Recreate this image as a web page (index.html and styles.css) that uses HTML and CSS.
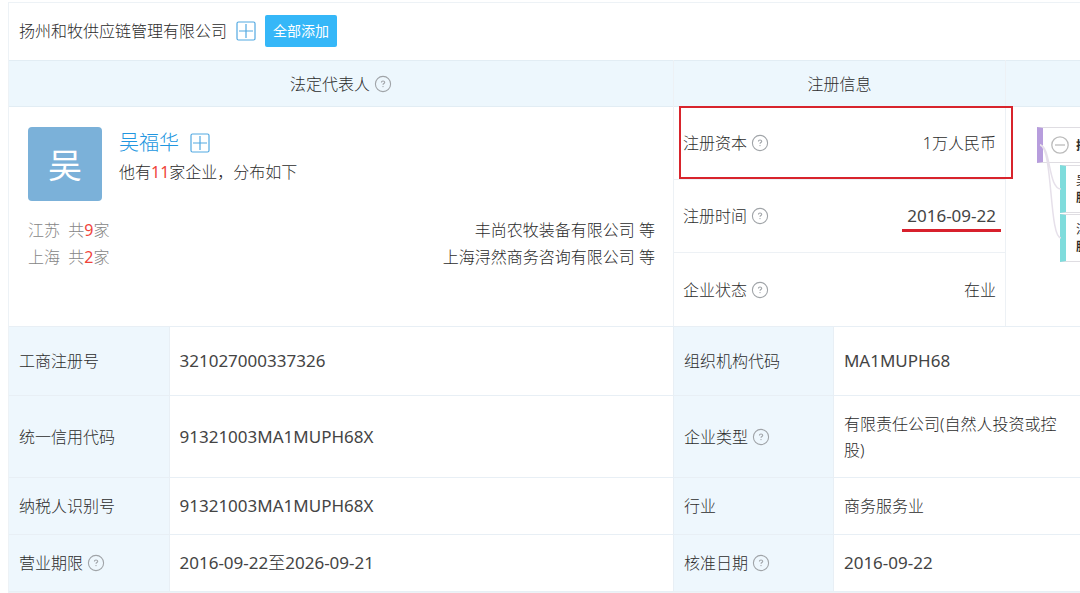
FILE: index.html
```html
<!DOCTYPE html>
<html lang="zh-CN">
<head>
<meta charset="utf-8">
<meta name="viewport" content="width=device-width, initial-scale=1">
<title>扬州和牧供应链管理有限公司</title>
<link rel="stylesheet" href="styles.css">
</head>
<body>
<svg class="defs" aria-hidden="true">
  <symbol id="help" viewBox="0 0 18 18"><circle cx="9" cy="9" r="7.6" fill="none" stroke="currentColor" stroke-width="1.1"/><path d="M7.4 7.5c0-2 3.3-2 3.3-.1 0 1.2-1.7 1.1-1.7 2.4" fill="none" stroke="currentColor" stroke-width="1.1"/><circle cx="9" cy="11.6" r=".7" fill="currentColor"/></symbol>
  <symbol id="plus" viewBox="0 0 20 20"><rect x="1" y="1" width="18" height="18" rx="1.5" fill="none" stroke="currentColor" stroke-width="1.2"/><path d="M10 3v14M3 10h14" fill="none" stroke="currentColor" stroke-width="1.2"/></symbol>
</svg>
<main class="company">
  <header class="company-head">
    <h1 class="company-name">扬州和牧供应链管理有限公司</h1>
    <button class="icon-button" aria-label="添加"><svg><use href="#plus"/></svg></button>
    <button class="add-all">全部添加</button>
  </header>

  <div class="overview">
    <section class="column">
      <h2 class="column-title">法定代表人<svg class="help"><use href="#help"/></svg></h2>
      <div class="person">
        <div class="person-head">
          <div class="avatar">吴</div>
          <div class="person-text">
            <div class="person-name"><a href="#person">吴福华</a><button class="icon-button" aria-label="添加吴福华"><svg><use href="#plus"/></svg></button></div>
            <p>他有<em>11</em>家企业，分布如下</p>
          </div>
        </div>
        <ul class="regions">
          <li><span class="region">江苏&nbsp; 共<em>9</em>家</span><span>丰尚农牧装备有限公司 等</span></li>
          <li><span class="region">上海&nbsp; 共<em>2</em>家</span><span>上海浔然商务咨询有限公司 等</span></li>
        </ul>
      </div>
    </section>

    <section class="column">
      <h2 class="column-title">注册信息</h2>
      <dl class="facts">
        <div class="fact marked"><dt>注册资本<svg class="help"><use href="#help"/></svg></dt><dd>1万人民币</dd></div>
        <div class="fact"><dt>注册时间<svg class="help"><use href="#help"/></svg></dt><dd class="latin underlined">2016-09-22</dd></div>
        <div class="fact"><dt>企业状态<svg class="help"><use href="#help"/></svg></dt><dd>在业</dd></div>
      </dl>
    </section>

    <section class="column tree-column">
      <h2 class="column-title"></h2>
      <div class="tree">
        <svg class="links"><path d="M3 38C14 39 11 82 24 82M3 38C16 40 12 131 24 131" fill="none" stroke="#e6e0ea" stroke-width="1.5"/></svg>
        <div class="node root"><svg class="collapse" viewBox="0 0 18 18"><circle cx="9" cy="9" r="8.2" fill="none" stroke="#bbb" stroke-width="1.3"/><path d="M4 9h10" stroke="#bbb" stroke-width="1.3"/></svg>扬州和牧</div>
        <div class="node child first">吴福华<br>股东</div>
        <div class="node child second">江苏<br>股东</div>
      </div>
    </section>
  </div>

  <table class="details">
    <colgroup><col class="label-col"><col class="wide-col"><col class="label-col"><col></colgroup>
    <tr class="row-medium"><th scope="row">工商注册号</th><td class="latin">321027000337326</td><th scope="row">组织机构代码</th><td class="latin">MA1MUPH68</td></tr>
    <tr class="row-tall"><th scope="row">统一信用代码</th><td class="latin">91321003MA1MUPH68X</td><th scope="row">企业类型<svg class="help"><use href="#help"/></svg></th><td>有限责任公司(自然人投资或控股)</td></tr>
    <tr><th scope="row">纳税人识别号</th><td class="latin">91321003MA1MUPH68X</td><th scope="row">行业</th><td>商务服务业</td></tr>
    <tr><th scope="row">营业期限<svg class="help"><use href="#help"/></svg></th><td class="latin">2016-09-22<span class="light">至</span>2026-09-21</td><th scope="row">核准日期<svg class="help"><use href="#help"/></svg></th><td class="latin">2016-09-22</td></tr>
  </table>
</main>
</body>
</html>
```
FILE: styles.css
```css
* { box-sizing: border-box; }
body {
  margin: 0;
  background: #fff;
  color: #2c2c2c;
  font: 300 16px/26px "Noto Sans", "Noto Sans CJK SC", sans-serif;
  overflow-x: hidden;
}
h1, h2, p, ul, dl, dd { margin: 0; padding: 0; font-weight: inherit; font-size: inherit; }
ul { list-style: none; }
em { font-style: normal; font-weight: 400; color: #f0443a; }
button { padding: 0; border: 0; background: none; font: inherit; cursor: pointer; }
.defs { position: absolute; width: 0; height: 0; }
.latin { color: #444; font-size: 17px; font-weight: 400; }
.light { color: #2c2c2c; font-weight: 300; }

.company { margin: 2px 0 0 8px; border: 1px solid #edf2f6; border-right: 0; }
.company-head { display: flex; align-items: center; gap: 9px; height: 57px; padding: 0 0 2px 10px; }
.icon-button { width: 20px; height: 20px; color: #53a9e2; }
.icon-button svg { display: block; width: 20px; height: 20px; }
.add-all { padding: 3px 8px; border-radius: 2px; background: #35b7f8; color: #fff; font-size: 14px; font-weight: 400; }

.overview { display: grid; grid-template-columns: minmax(0, 665fr) minmax(0, 332fr) minmax(0, 74fr); }
.column { border-right: 1px solid #edf1f5; }
.column-title {
  display: flex; align-items: center; justify-content: center;
  height: 47px; background: #edf7fd;
  border: solid #e2edf4; border-width: 1px 0;
}
.help { width: 18px; height: 18px; margin-left: 4px; vertical-align: -3px; color: #a0a4a8; flex: none; }

.person { padding: 20px 18px 0 19px; }
.person-head { display: flex; gap: 17px; }
.avatar { width: 74px; height: 74px; border-radius: 4px; background: #7bb1d9; color: #fff; font-size: 34px; font-weight: 400; line-height: 76px; text-align: center; }
.person-name { display: flex; align-items: center; gap: 11px; height: 32px; font-size: 20px; }
.person-name a { color: #2196e0; text-decoration: none; }
.regions { padding-top: 16px; line-height: 27px; }
.regions li { display: flex; justify-content: space-between; }
.region { color: #858585; }

.fact { display: flex; align-items: center; justify-content: space-between; position: relative; height: 73px; padding: 0 9px; border-bottom: 1px solid #edf1f5; }
.fact:last-child { border-bottom: 0; }
.marked::after { content: ""; position: absolute; inset: -1px -8px 0 5px; border: 2px solid #d8242c; z-index: 1; }
.underlined { position: relative; }
.underlined::after { content: ""; position: absolute; left: -5px; right: -5px; bottom: -3px; height: 3px; background: #d8202c; }

.tree-column { border-right: 0; }
.tree { position: relative; height: 219px; overflow: hidden; font-size: 12px; font-weight: 700; line-height: 17px; }
.links { position: absolute; left: 31px; top: 0; width: 34px; height: 180px; z-index: 1; }
.node { position: absolute; width: 220px; border: 1px solid #dfdde2; background: #fff; }
.root { left: 31px; top: 20px; height: 36px; display: flex; align-items: center; gap: 7px; padding-left: 8px; border-left: 6px solid #b79ddd; }
.collapse { width: 18px; height: 18px; }
.child { left: 54px; height: 48px; padding: 6px 0 0 10px; border-left: 6px solid #7fdcdc; }
.child::first-line { font-weight: 400; }
.first { top: 58px; }
.second { top: 107px; }

.details { width: 100%; table-layout: fixed; border-collapse: collapse; }
.label-col { width: 160px; }
.wide-col { width: 47.1%; }
.details tr { height: 57px; }
.details .row-medium { height: 69px; }
.details .row-tall { height: 82px; }
.details th, .details td { padding: 0 20px 0 10px; border: 1px solid #e8eff5; text-align: left; }
.details th { padding-right: 0; background: #eef7fd; font-weight: 300; }
.details th:first-child { border-left: 0; }
.details td:last-child { border-right: 0; }
```
